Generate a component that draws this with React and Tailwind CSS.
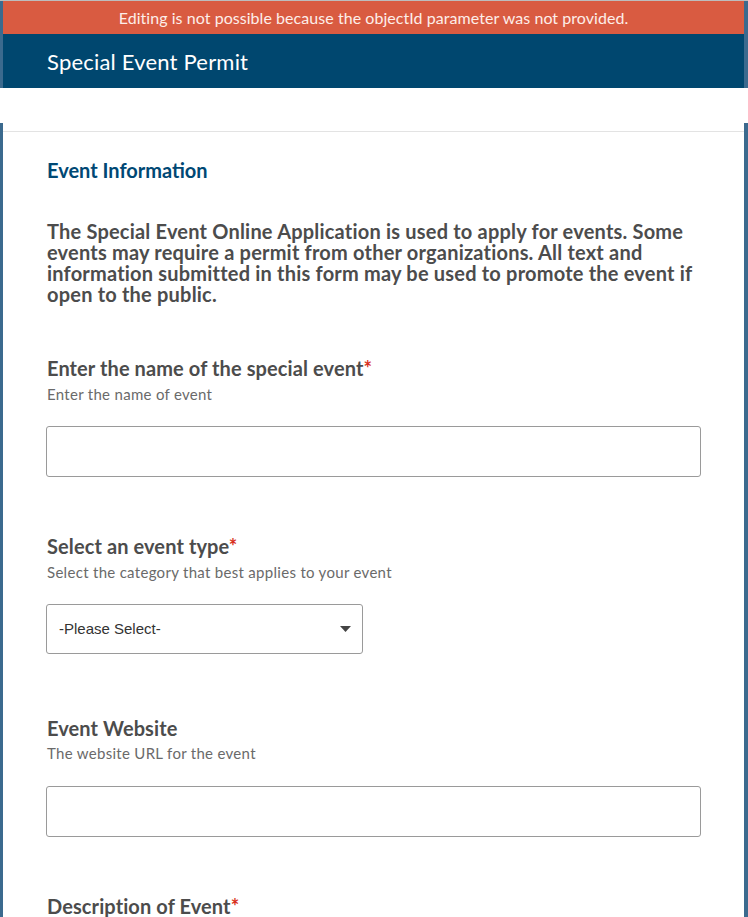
import React from "react";

const font = { fontFamily: "Lato, 'Noto Sans', sans-serif" };

function Label({ children, required }) {
  return (
    <div className="text-[20px] leading-[24px] font-bold text-[#4c4c4c] tracking-[0.1px]">
      {children}
      {required && <span className="text-[#d83020]">*</span>}
    </div>
  );
}

function Sub({ children }) {
  return <div className="text-[15px] leading-[20px] text-[#6a6a6a] tracking-[0.3px]">{children}</div>;
}

export default function App() {
  return (
    <div className="w-[748px] h-[917px] overflow-hidden bg-white flex flex-col" style={font}>
      <div className="border-t border-[#bdbdbd] bg-[#3b6a8e] pl-[3px] pr-[4px] shrink-0">
        <div className="h-[33px] bg-[#d95b41] flex items-center justify-center text-[16px] text-[#fdeee9] tracking-[0.05px]">
          Editing is not possible because the objectId parameter was not provided.
        </div>
        <div className="h-[54px] bg-[#00476f] flex items-center pl-[44px] text-[22px] text-white font-normal tracking-[0.2px]">
          Special Event Permit
        </div>
      </div>
      <div className="h-[35px] shrink-0 bg-white" />
      <div className="flex-1 flex bg-[#3b6a8e] pl-[3px] pr-[4px]">
        <div className="flex-1 bg-white">
          <div className="h-[9px] border-b border-[#e3e3e3]" />
          <div className="pl-[44px] pr-[43px]">
            <div className="pt-[26px] text-[20px] leading-[24px] font-bold text-[#004874]">
              Event Information
            </div>
            <p className="mt-[39px] text-[20px] leading-[21px] font-bold text-[#4c4c4c] tracking-[0.2px]">
              The Special Event Online Application is used to apply for events. Some events may require a permit from other organizations. All text and information submitted in this form may be used to promote the event if open to the public.
            </p>

            <div className="mt-[51px]">
              <Label required>Enter the name of the special event</Label>
              <div className="mt-[4px]"><Sub>Enter the name of event</Sub></div>
              <div className="mt-[22px] -ml-px h-[51px] border border-[#9a9a9a] rounded-[3px] bg-white" />
            </div>

            <div className="mt-[57px]">
              <Label required>Select an event type</Label>
              <div className="mt-[4px]"><Sub>Select the category that best applies to your event</Sub></div>
              <div className="mt-[22px] -ml-px h-[50px] w-[317px] border border-[#9a9a9a] rounded-[3px] bg-white flex items-center justify-between pl-[12px] pr-[11px]">
                <span className="text-[15px] text-[#333]" style={{ fontFamily: "'Liberation Sans', Arial, sans-serif" }}>-Please Select-</span>
                <svg width="11" height="6" viewBox="0 0 11 6"><path d="M0 0h11L5.5 6z" fill="#444" /></svg>
              </div>
            </div>

            <div className="mt-[62px]">
              <Label>Event Website</Label>
              <div className="mt-[3px]"><Sub>The website URL for the event</Sub></div>
              <div className="mt-[23px] -ml-px h-[51px] border border-[#9a9a9a] rounded-[3px] bg-white" />
            </div>

            <div className="mt-[57px]">
              <Label required>Description of Event</Label>
            </div>
          </div>
        </div>
      </div>
    </div>
  );
}
